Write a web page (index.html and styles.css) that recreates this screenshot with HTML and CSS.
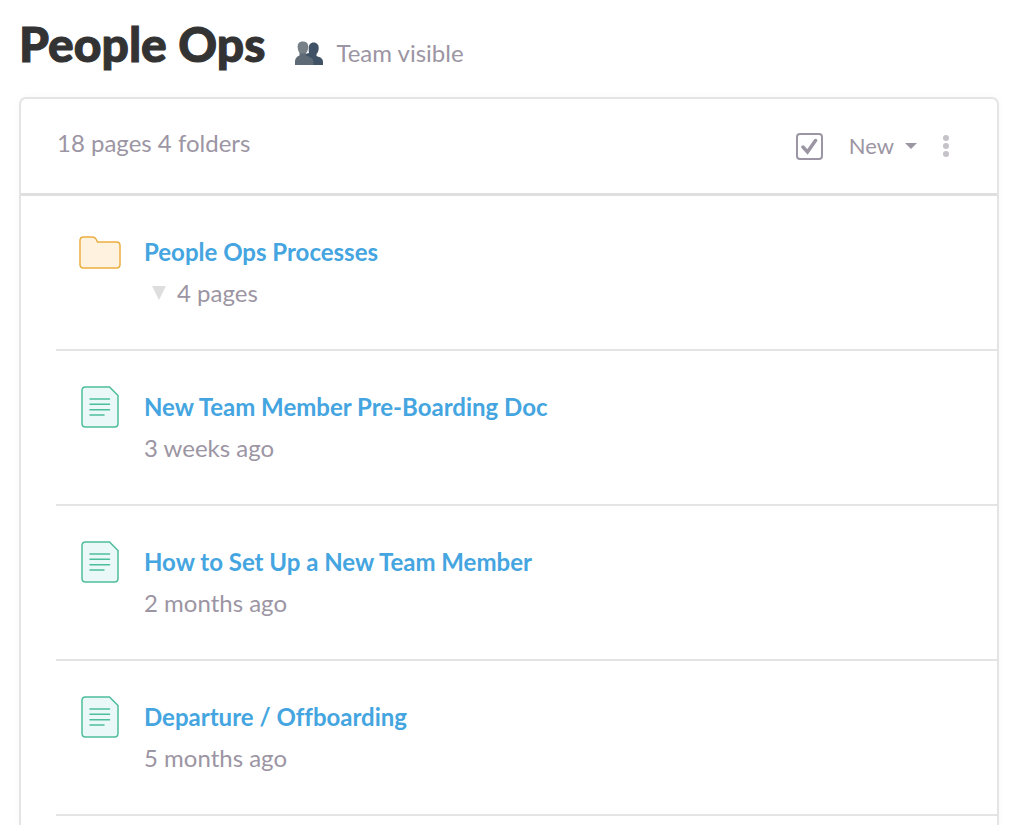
FILE: index.html
```html
<!DOCTYPE html>
<html lang="en">
<head>
  <meta charset="UTF-8" />
  <meta name="viewport" content="width=device-width, initial-scale=1.0" />
  <title>People Ops</title>
  <link rel="stylesheet" href="styles.css">
</head>
<body>
  <!-- shared icon shapes -->
  <svg class="sprite" aria-hidden="true">
    <symbol id="doc" viewBox="0 0 38 42">
      <path d="M4.5 1H28.5L37 9.5V37.5Q37 41 33.5 41H4.5Q1 41 1 37.5V4.5Q1 1 4.5 1Z" fill="#ebf8f8" stroke="#4dbd9b" stroke-width="1.5" />
      <path d="M9 13H28.5M9 18.3H28.5M9 23.7H28.5M9 29H23" fill="none" stroke="#4dbd9b" stroke-width="1.5" stroke-linecap="round" />
    </symbol>
  </svg>

  <header class="page-header">
    <h1>People Ops</h1>
    <div class="visibility">
      <svg class="team-icon" viewBox="0 0 28 24" aria-hidden="true">
        <path d="M18.5 1.5C22 1.5 24 4 23.7 7.5C23.5 10 22.8 12 21.5 13V15C25 16.2 28 17 28 21V24H10V13L14 12C13.7 10 13.7 9.5 13.7 7C13.5 4 15.5 1.5 18.5 1.5Z" fill="#3f5266" />
        <path d="M4.5 11H11V14.5C15 16 18.5 17 18.5 21.5V24H0V21.5C0 17 1.500 16 4.500 14.500Z" fill="#5e6b77" />
        <path d="M7.800 0.500C11.500 0.500 13.600 2.500 13.200 6.500C13 9.500 12 11.500 10.500 12.500H5.500C3.800 11.500 2.900 9.500 2.700 6.500C2.400 2.500 4.300 0.500 7.800 0.500Z" fill="#777f87" />
      </svg>
      <span>Team visible</span>
    </div>
  </header>

  <main class="card">
    <div class="toolbar">
      <span class="summary">18 pages 4 folders</span>
      <div class="actions">
        <label class="select-all">
          <input type="checkbox" checked aria-label="Select pages" />
          <svg class="tick" viewBox="0 0 17 17" aria-hidden="true">
            <path d="M2 9L6.500 14L14.500 2.500" fill="none" stroke="#9c95a3" stroke-width="3.500" stroke-linecap="round" />
          </svg>
        </label>
        <button class="new-button" type="button">New
          <svg class="caret" viewBox="0 0 12 6" aria-hidden="true"><path d="M0 0H12L6 6Z" fill="#9c95a3" /></svg>
        </button>
        <button class="more-button" type="button" aria-label="More">
          <svg class="dots" viewBox="0 0 6 22" aria-hidden="true">
            <g fill="#c6c2ca"><circle cx="3" cy="3" r="3" /><circle cx="3" cy="11" r="3" /><circle cx="3" cy="19" r="3" /></g>
          </svg>
        </button>
      </div>
    </div>

    <ul class="pages">
      <li class="page">
        <svg class="icon" viewBox="0 0 42 42" aria-hidden="true">
          <path d="M1 9.500Q1 6 4.500 6H13Q16 6 17 8L18.500 11H37.500Q41 11 41 14.500V33.500Q41 37 37.500 37H4.500Q1 37 1 33.500Z" fill="#fff2df" stroke="#ebae40" stroke-width="1.500" />
        </svg>
        <div>
          <a class="title" href="#">People Ops Processes</a>
          <button class="expand" type="button">
            <svg class="arrow" viewBox="0 0 14 14" aria-hidden="true"><path d="M0 0H14L7 14Z" fill="#dedede" /></svg>
            4 pages
          </button>
        </div>
      </li>
      <li class="page">
        <svg class="icon" aria-hidden="true"><use href="#doc" /></svg>
        <div>
          <a class="title" href="#">New Team Member Pre-Boarding Doc</a>
          <div class="meta">3 weeks ago</div>
        </div>
      </li>
      <li class="page">
        <svg class="icon" aria-hidden="true"><use href="#doc" /></svg>
        <div>
          <a class="title" href="#">How to Set Up a New Team Member</a>
          <div class="meta">2 months ago</div>
        </div>
      </li>
      <li class="page">
        <svg class="icon" aria-hidden="true"><use href="#doc" /></svg>
        <div>
          <a class="title" href="#">Departure / Offboarding</a>
          <div class="meta">5 months ago</div>
        </div>
      </li>
    </ul>
  </main>
</body>
</html>
```
FILE: styles.css
```css
* {
  box-sizing: border-box;
}
:root {
  --text-color: #333;
  --muted-color: #9c95a3;
  --link-color: #44a5e0;
  --line-color: #e4e4e4;
}
body {
  margin: 0;
  padding: 0 25px 0 19px;
  min-height: 100vh;
  display: flex;
  flex-direction: column;
  background: #fff;
  color: var(--muted-color);
  font-family: Lato, sans-serif;
  font-size: 24px;
  line-height: 32px;
  font-variant-ligatures: none;
}
button {
  padding: 0;
  border: none;
  background: none;
  color: inherit;
  font: inherit;
  cursor: pointer;
}
svg {
  display: block;
  flex: none;
}
.sprite {
  position: absolute;
  width: 0;
  height: 0;
}
.page-header {
  display: flex;
  align-items: center;
  gap: 30px;
  padding: 14px 0 23px;
}
h1 {
  margin: 0;
  color: var(--text-color);
  font-size: 48px;
  font-weight: 900;
  line-height: 60px;
  -webkit-text-stroke: 1px var(--text-color);
}
.visibility {
  display: flex;
  align-items: center;
  gap: 13px;
  padding-top: 18px;
}
.team-icon {
  width: 28px;
  height: 24px;
}
.card {
  flex: 1;
  border: 2px solid var(--line-color);
  border-bottom: none;
  border-radius: 7px 7px 0 0;
  box-shadow: 0 0 8px rgba(0,0,0,0.03);
}
.toolbar {
  display: flex;
  justify-content: space-between;
  align-items: center;
  height: 97px;
  padding: 0 48px 0 36px;
  border-bottom: 3px solid #dfdfdf;
}
.summary {
  padding-bottom: 6px;
}
.actions {
  display: flex;
  align-items: center;
  gap: 26px;
}
.select-all {
  position: relative;
}
.select-all input {
  display: block;
  appearance: none;
  width: 27px;
  height: 27px;
  margin: 0;
  border: 2px solid var(--muted-color);
  border-radius: 4px;
}
.tick {
  position: absolute;
  top: 5px;
  left: 5px;
  width: 17px;
  height: 17px;
  visibility: hidden;
}
input:checked + .tick {
  visibility: visible;
}
.new-button {
  display: flex;
  align-items: center;
  gap: 11px;
  font-size: 22px;
}
.caret {
  width: 12px;
  height: 6px;
}
.dots {
  width: 6px;
  height: 22px;
}
.pages {
  list-style: none;
  margin: 0;
  padding: 0 0 0 35px;
}
.page {
  display: flex;
  gap: 23px;
  height: 155px;
  padding: 35px 0 0 23px;
  border-bottom: 2px solid var(--line-color);
}
.icon {
  width: 42px;
  height: 42px;
}
.title {
  display: block;
  margin: 5px 0 9px;
  color: var(--link-color);
  font-weight: bold;
  text-decoration: none;
}
.title:hover {
  text-decoration: underline;
}
.expand {
  display: flex;
  align-items: center;
  gap: 11px;
  padding-left: 8px;
}
.arrow {
  width: 14px;
  height: 14px;
}
```
